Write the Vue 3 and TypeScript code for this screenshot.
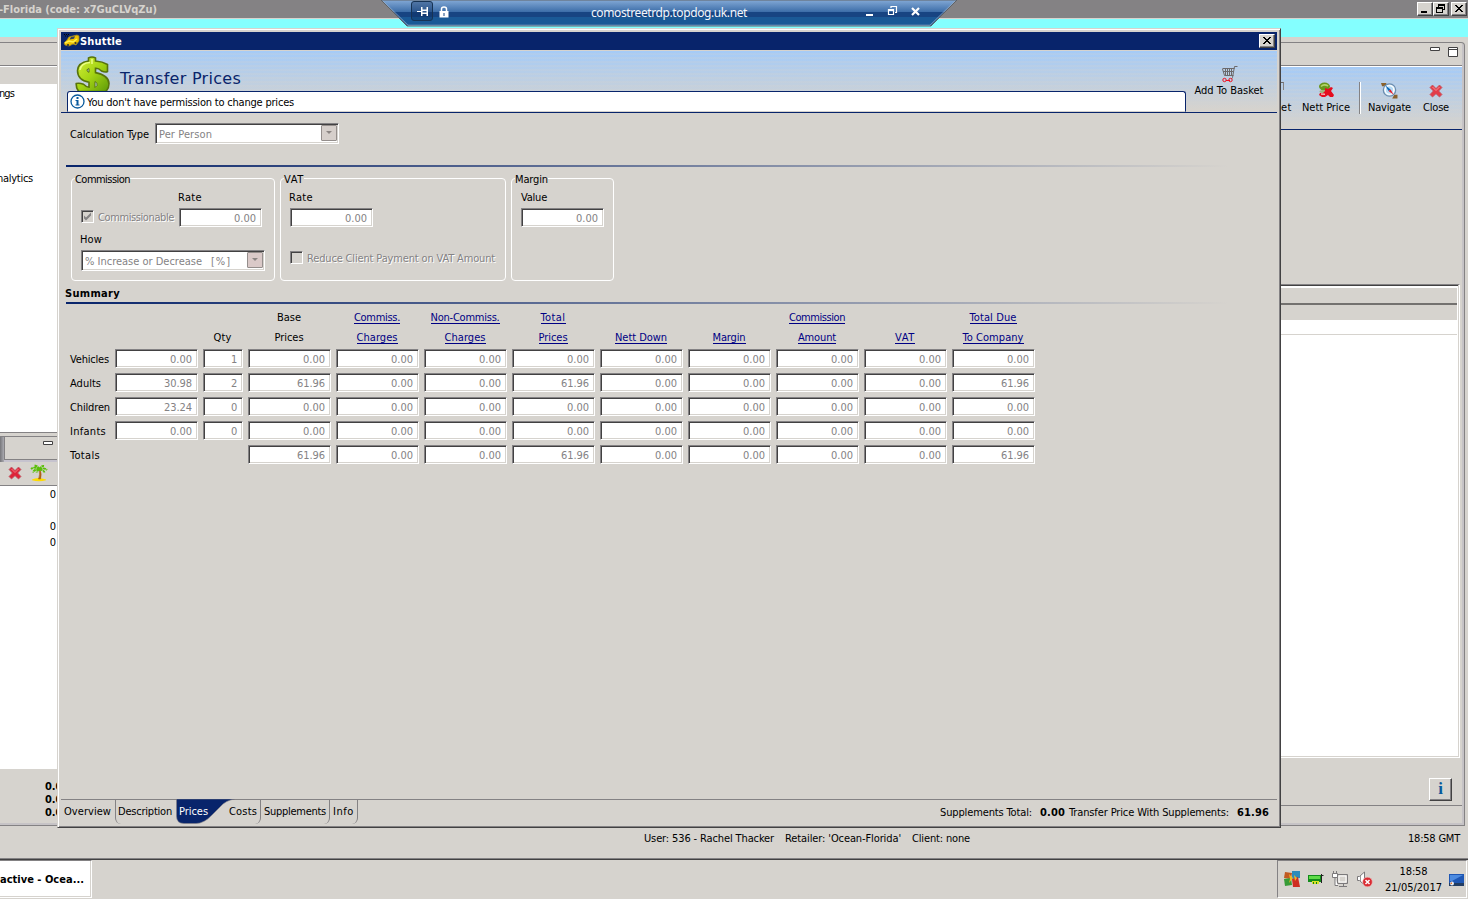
<script setup lang="ts">
import type { Directive } from 'vue'

// Spreads a label over a given pixel width by adjusting its tracking.
const vFit: Directive<HTMLElement, number> = {
  mounted(el, binding) {
    const natural = el.getBoundingClientRect().width
    const count = (el.textContent ?? '').length
    if (count > 0) el.style.letterSpacing = `${(binding.value - natural) / count}px`
  },
}

interface Column {
  top: string
  topW: number
  bottom: string
  bottomW: number
  link: boolean
}
interface Row {
  label: string
  width: number
  cells: string[]
}

const columns: Column[] = [
  { top: '', topW: 0, bottom: '', bottomW: 0, link: false },
  { top: '', topW: 0, bottom: 'Qty', bottomW: 18, link: false },
  { top: 'Base', topW: 24, bottom: 'Prices', bottomW: 29, link: false },
  { top: 'Commiss.', topW: 46, bottom: 'Charges', bottomW: 41, link: true },
  { top: 'Non-Commiss.', topW: 69, bottom: 'Charges', bottomW: 41, link: true },
  { top: 'Total', topW: 25, bottom: 'Prices', bottomW: 29, link: true },
  { top: '', topW: 0, bottom: 'Nett Down', bottomW: 52, link: true },
  { top: '', topW: 0, bottom: 'Margin', bottomW: 33, link: true },
  { top: 'Commission', topW: 56, bottom: 'Amount', bottomW: 38, link: true },
  { top: '', topW: 0, bottom: 'VAT', bottomW: 20, link: true },
  { top: 'Total Due', topW: 47, bottom: 'To Company', bottomW: 61, link: true },
]

const rows: Row[] = [
  { label: 'Vehicles', width: 39, cells: ['0.00', '1', '0.00', '0.00', '0.00', '0.00', '0.00', '0.00', '0.00', '0.00', '0.00'] },
  { label: 'Adults', width: 31, cells: ['30.98', '2', '61.96', '0.00', '0.00', '61.96', '0.00', '0.00', '0.00', '0.00', '61.96'] },
  { label: 'Children', width: 40, cells: ['23.24', '0', '0.00', '0.00', '0.00', '0.00', '0.00', '0.00', '0.00', '0.00', '0.00'] },
  { label: 'Infants', width: 36, cells: ['0.00', '0', '0.00', '0.00', '0.00', '0.00', '0.00', '0.00', '0.00', '0.00', '0.00'] },
  { label: 'Totals', width: 30, cells: ['', '', '61.96', '0.00', '0.00', '61.96', '0.00', '0.00', '0.00', '0.00', '61.96'] },
]

// Digits advance 6px and the decimal point 4px.
const numberWidth = (value: string): number => (value.includes('.') ? (value.length - 1) * 6 + 4 : value.length * 6)
</script>

<template>
  <div class="screen">
    <header class="app-title">
      <b v-fit="158" class="t app-name">-Florida (code: x7GuCLVqZu)</b>
      <div class="caption-btns">
        <span class="cap"><svg width="16" height="14"><path d="M4 9h6v2H4z" /></svg></span>
        <span class="cap"><svg width="16" height="14" fill="none" stroke="#000"><path d="M5.500 5V2.500h6v5H10M5 3.500h7M3.500 5.500h6v5h-6zM3 6.500h7" /></svg></span>
        <span class="cap last"><svg width="16" height="14"><path d="M4 3h2v1h1v1h2V4h1V3h2v1h-1v1h-1v1H9v1h1v1h1v1h1v1h-2V9H9V8H7v1H6v1H4V9h1V8h1V7h1V6H6V5H5V4H4z" /></svg></span>
      </div>
    </header>
    <div class="cyan"></div>

    <div class="workspace">
      <aside class="left">
        <div class="l-tab"></div>
        <div class="l-head"></div>
        <div class="l-tree">
          <span v-fit="15" class="t">ngs</span>
          <span v-fit="36" class="t second">nalytics</span>
        </div>
        <div class="l-gap"></div>
        <div class="l-tabs2">
          <div class="l-tabs2-in"><svg width="11" height="5"><path d="M.5.5h9v3h-9z" fill="#fff" stroke="#424142" /></svg></div>
        </div>
        <div class="l-tools">
          <svg width="14" height="14" viewBox="0 0 14 14"><path d="M3.500 1 7 4.500 10.500 1 13 3.500 9.700 7 13 10.500 10.500 13 7 9.700 3.500 13 1 10.500 4.300 7 1 3.500z" fill="#de2439" stroke="#b8606a" stroke-width=".8" /><path d="m3.500 3 3.500 3.500L10.500 3" stroke="#f47a80" fill="none" /></svg>
          <svg class="palm" width="18" height="18" viewBox="0 0 18 18"><path d="M2 15.500q6-3 14 0v.8q-7 2-14 0z" fill="#ffdb00" /><path d="M9 6q1.500 4-.5 9h2q1.500-5-.3-9z" fill="#b56a10" stroke="#9a5510" stroke-width=".5" /><path d="M9.500 5.500Q8 2 4.500 1.500M9.500 5.500Q5 2 1 5M9.500 5.500Q4 5 3 8.500M9.500 5.500Q7 6 6.500 8.500M9.500 5.500Q11 1.500 14 2M9.500 5.500Q14 3 17 6M9.500 5.500Q14 6 14.500 8.500" stroke="#5abf08" stroke-width="1.900" fill="none" stroke-dasharray="3 .6" /></svg>
        </div>
        <div class="l-values">
          <span class="t">0</span><span class="t v2">0</span><span class="t">0</span>
        </div>
        <div class="l-totals">
          <b v-fit="24" class="t">0.00</b><b v-fit="24" class="t">0.00</b><b v-fit="24" class="t">0.00</b>
        </div>
        <div class="l-foot"></div>
      </aside>

      <section class="right">
        <div class="r-tab">
          <svg width="28" height="11"><path d="M.5.5h9v3h-9zM18.500.5h9v9h-9z" fill="#fff" stroke="#424142" /><path d="M18 2.500h10" stroke="#424142" /></svg>
        </div>
        <div class="r-tools">
          <span class="r-cut"><i></i><span v-fit="11" class="t">et</span></span>
          <span class="tool nett">
            <svg width="16" height="16" viewBox="0 0 16 16"><ellipse cx="6.500" cy="4.500" rx="5.500" ry="4" fill="#69971d" /><path d="M3 4.500q3-3 7-.5" stroke="#b3d56b" stroke-width="1.500" fill="none" /><ellipse cx="5.500" cy="9.500" rx="4" ry="1.500" fill="#a1b47c" /><path d="m7 6 3 1 3-2 2 1-2 3 3 4-1 2h-3l-2-2-3 2H4l-3-2 1-2h3l2-2z" fill="#e50c1e" /><path d="m3 12 4 .2" stroke="#fff" /></svg>
            <span v-fit="48" class="t">Nett Price</span>
          </span>
          <i class="tool-sep"></i>
          <span class="tool nav">
            <svg width="17" height="17" viewBox="0 0 16 16"><path d="M0 1h5v3H1zM10.500 15.500h5v-3.500h-3z" fill="#8a612b" /><circle cx="8" cy="7.500" r="5.800" fill="#e4f1fa" stroke="#6b8daf" stroke-width="1.200" /><circle cx="8" cy="7.500" r="4" fill="#b6dcf6" stroke="#fff" /><path d="m4 3 5 4-2 1.500z" fill="#0c68b8" /><path d="m12 12-5-3.500L9 7z" fill="#e31c2a" /></svg>
            <span v-fit="43" class="t">Navigate</span>
          </span>
          <span class="tool close">
            <svg width="16" height="16" viewBox="-1 -2 16 16"><path d="M3.500 1 7 4.500 10.500 1 13 3.500 9.700 7 13 10.500 10.500 13 7 9.700 3.500 13 1 10.500 4.300 7 1 3.500z" fill="#e43c48" stroke="#bf5560" stroke-width=".8" /><path d="m3.500 3 3.500 3.500L10.500 3" stroke="#f79095" fill="none" /></svg>
            <span v-fit="26" class="t">Close</span>
          </span>
        </div>
        <div class="r-space"></div>
        <div class="r-table">
          <div class="r-th"></div>
          <div class="r-tr"></div>
          <div class="r-line"></div>
        </div>
        <div class="r-info"><span class="info-btn">i</span></div>
        <div class="r-bottom"></div>
      </section>
    </div>

    <div class="status">
      <span v-fit="130" class="t">User: 536 - Rachel Thacker</span>
      <span v-fit="116" class="t">Retailer: 'Ocean-Florida'</span>
      <span v-fit="58" class="t">Client: none</span>
      <span v-fit="52" class="t gmt">18:58 GMT</span>
    </div>

    <footer class="taskbar">
      <div class="task"><b v-fit="84" class="t">active - Ocea...</b></div>
      <div class="tray">
        <svg width="16" height="16" viewBox="0 0 16 16"><path d="M1 1 8 2 7 8 0 7z" fill="#c15a22" /><path d="M8 0h8v7l-8 1z" fill="#2d8bb9" /><path d="m0 8 7-1 1 7-7 1z" fill="#389c36" /><path d="m8 8 6-2 2 10H9z" fill="#cf2e22" /><path d="m5 3 4 4-4 5 1-4zM10 4l3 3-2 3z" fill="#f2b621" /></svg>
        <svg width="16" height="16" viewBox="0 0 16 16"><path d="M0 4h14v7H0z" fill="#128c1b" /><path d="M1 5h11v3H1z" fill="#5edb48" /><path d="M4 10h7v3H4z" fill="#d8e329" /><path d="M13 4.500h2.500M13.500 3v9" stroke="#222" /><path d="M5.500 11v2M8.500 11v2" stroke="#158012" /></svg>
        <svg width="17" height="17" viewBox="0 0 17 17" fill="#d6d3ce" stroke="#7b797b"><path d="M5.500 3.500h10v9h-10zM7 15.500h8M11.500 13v2.500" /><path d="M7 5h7v6H7z" stroke="#fff" /><path d="M.5 2.500h5v4h-5zM1.500 0v2.500M4.500 0v2.500M3 7v7.500h3" fill="#fff" /></svg>
        <svg class="vol" width="17" height="17" viewBox="0 0 17 17"><path d="M1.500 5.500h2l5-4.500v13l-5-4.500h-2z" fill="#fff" stroke="#7b797b" /><path d="M4.500 5v5" stroke="#999" /><circle cx="11.500" cy="11" r="4.800" fill="#d92b32" stroke="#f0b9b9" stroke-width=".6" /><path d="m9.500 9 4 4m0-4-4 4" stroke="#fff" stroke-width="1.500" /></svg>
        <div class="clock"><span v-fit="28" class="t">18:58</span><span v-fit="57" class="t">21/05/2017</span></div>
        <svg class="desk" width="15" height="13" viewBox="0 0 15 13"><path d="M0 0h15v9H0z" fill="#1f57b4" /><path d="M1 1h13L3 7H1z" fill="#4d8be0" /><path d="M0 9h15v3H0z" fill="#223d63" /><circle cx="3" cy="9.500" r="2" fill="#e9eef5" /><path d="M1 10h2V8z" fill="#e0752c" /></svg>
      </div>
    </footer>

    <!-- Shuttle dialog -->
    <div class="dialog">
      <div class="dlg-title">
        <svg width="17" height="14" viewBox="0 0 17 14"><path d="m1 9 3-3 2-3 8-2 2 1v5l-3 4-3-1-4 2-4-1z" fill="#efc200" stroke="#a58a20" stroke-width=".8" /><path d="m6.500 5.500 1.500-2.500 4-.8-1 2.500z" fill="#34415f" /><path d="m2 9 4-2 4 1 4-3" stroke="#fff04c" fill="none" stroke-width="1.500" /><circle cx="5" cy="11" r="1.100" fill="#333" /><circle cx="12.500" cy="9" r="1.100" fill="#333" /><path d="M1 .5h5M2 2h4" stroke="#000" stroke-dasharray="1 1" /></svg>
        <b v-fit="42" class="t">Shuttle</b>
        <span class="cap dlg-x"><svg width="16" height="14"><path d="M4 3h2v1h1v1h2V4h1V3h2v1h-1v1h-1v1H9v1h1v1h1v1h1v1h-2V9H9V8H7v1H6v1H4V9h1V8h1V7h1V6H6V5H5V4H4z" /></svg></span>
      </div>

      <div class="banner">
        <div class="banner-main">
          <div class="banner-head">
            <svg width="36" height="35" viewBox="0 0 36 35"><defs><linearGradient id="dollar" x1="0" y1="0" x2="1" y2="1"><stop offset="0" stop-color="#d8f03c" /><stop offset=".5" stop-color="#a4d414" /><stop offset="1" stop-color="#5d9a08" /></linearGradient></defs><path d="M13.500 2q3.500-2 7 0v3q7 .5 12 3.500v7q-2 1.300-6-.5-3-3-6-2.700v4.300q13 2.500 13.500 11 0 5-3.500 8H4q-3-3-2.800-8 3-1 7.300.7 3 3 5.500 3v-5Q2.500 24 2.500 14.500 3 6.500 13.500 5z" fill="url(#dollar)" stroke="#58730c" stroke-width="1.600" /><path d="M14 12.500q-3.500 1-1.500 3l1.500.8zM20 25.500q3 1.500 2 4l-2 2z" fill="#bcd6ec" stroke="#58730c" /><path d="M5 14q1-7 10-7.500M17 3v5" stroke="#eaff84" stroke-width="1.500" fill="none" /></svg>
            <h1 v-fit="121">Transfer Prices</h1>
          </div>
          <div class="notice">
            <svg width="15" height="15" viewBox="0 0 15 15"><circle cx="7.500" cy="7.500" r="6.500" fill="#fff" stroke="#08599c" stroke-width="1.300" /><path d="M6.500 3h2v2h-2zM5.500 6h3v4.500h1v1h-4v-1h1V7h-1z" fill="#08599c" /></svg>
            <span v-fit="207" class="t">You don't have permission to change prices</span>
          </div>
        </div>
        <div class="basket">
          <svg width="16" height="17" viewBox="0 0 16 17" fill="none" stroke="#6b696b"><path d="M15.500.5h-3l-2 11-1 1.500M.5 2.500h12M.5 3l2 6.500h9M3.500 3v6M5.500 3v6M7.500 3v6M9.500 3v6M1 5.500h10" /><path d="M4 14.500h4" stroke="#ef1021" /><circle cx="2.500" cy="14" r="1.700" stroke="#ef1021" /><circle cx="8.500" cy="14" r="1.700" stroke="#ef1021" /></svg>
          <span v-fit="69" class="t">Add To Basket</span>
        </div>
      </div>

      <div class="calc">
        <span v-fit="79" class="t">Calculation Type</span>
        <div class="field combo"><span v-fit="53" class="t">Per Person</span><i class="arrow"></i></div>
      </div>

      <div class="rule"></div>

      <div class="groups">
        <fieldset class="group g1">
          <span class="legend"><span v-fit="55" class="t">Commission</span></span>
          <div class="g-label rate"><span v-fit="24" class="t">Rate</span></div>
          <div class="g-row">
            <i class="check"><svg width="9" height="9"><path d="M1 3.500v3l2 2 5-5v-3l-5 5z" fill="#848284" /></svg></i>
            <span v-fit="76" class="t off">Commissionable</span>
            <div class="field"><span v-fit="22" class="t">0.00</span></div>
          </div>
          <div class="g-label how"><span v-fit="22" class="t">How</span></div>
          <div class="field combo"><span v-fit="117" class="t">% Increase or Decrease</span><span v-fit="20" class="t pct">[%]</span><i class="arrow pink"></i></div>
        </fieldset>
        <fieldset class="group g2">
          <span class="legend"><span v-fit="20" class="t">VAT</span></span>
          <div class="g-label"><span v-fit="24" class="t">Rate</span></div>
          <div class="g-row"><div class="field"><span v-fit="22" class="t">0.00</span></div></div>
          <div class="g-row reduce"><i class="check"></i><span v-fit="188" class="t off">Reduce Client Payment on VAT Amount</span></div>
        </fieldset>
        <fieldset class="group g3">
          <span class="legend"><span v-fit="33" class="t">Margin</span></span>
          <div class="g-label"><span v-fit="26" class="t">Value</span></div>
          <div class="g-row"><div class="field"><span v-fit="22" class="t">0.00</span></div></div>
        </fieldset>
      </div>

      <div class="summary-title"><b v-fit="55" class="t">Summary</b></div>
      <div class="rule"></div>

      <div class="summary">
        <div class="s-row s-head">
          <span></span>
          <div v-for="(c, i) in columns" :key="i" class="head" :class="{ link: c.link }">
            <span class="h-line"><span v-if="c.top" v-fit="c.topW" class="t">{{ c.top }}</span></span>
            <span class="h-line"><span v-if="c.bottom" v-fit="c.bottomW" class="t">{{ c.bottom }}</span></span>
          </div>
        </div>
        <div v-for="r in rows" :key="r.label" class="s-row">
          <span class="s-label"><span v-fit="r.width" class="t">{{ r.label }}</span></span>
          <div v-for="(v, i) in r.cells" :key="i" :class="{ field: v !== '' }">
            <span v-if="v" v-fit="numberWidth(v)" class="t">{{ v }}</span>
          </div>
        </div>
      </div>

      <div class="dlg-foot">
        <div class="tab overview"><span v-fit="47" class="t">Overview</span></div>
        <div class="tab desc"><span v-fit="54" class="t">Description</span></div>
        <div class="tab prices">
          <svg width="60" height="25"><path d="M.5 0H59Q50 1 44 8L36 16Q28 24.500 20 24.500H8Q.5 24.500.5 17z" fill="#08246b" stroke="#848284" stroke-width=".6" /></svg>
          <span v-fit="29" class="t">Prices</span>
        </div>
        <div class="tab costs"><span v-fit="28" class="t">Costs</span></div>
        <div class="tab supp"><span v-fit="62" class="t">Supplements</span></div>
        <div class="tab info"><span v-fit="21" class="t">Info</span></div>
        <div class="sums">
          <span v-fit="92" class="t">Supplements Total:</span>
          <b v-fit="25" class="t">0.00</b>
          <span v-fit="160" class="t">Transfer Price With Supplements:</span>
          <b v-fit="32" class="t">61.96</b>
        </div>
      </div>
    </div>

    <!-- Remote desktop connection bar -->
    <div class="rdp">
      <svg class="rdp-bg" width="576" height="27"><defs><linearGradient id="rdp" x1="0" y1="0" x2="0" y2="1"><stop offset="0" stop-color="#83a9d6" /><stop offset=".46" stop-color="#3c6da8" /><stop offset=".46" stop-color="#174482" /><stop offset=".64" stop-color="#174482" /><stop offset=".66" stop-color="#1a5996" /><stop offset="1" stop-color="#1a5996" /></linearGradient></defs><path d="M0 0H576L550 26H26z" fill="url(#rdp)" stroke="#5f6266" /><path d="M2 1 27 25.200H549L574 1" fill="none" stroke="#94abc4" stroke-width=".8" /></svg>
      <span class="pin"><svg width="12" height="11" viewBox="0 0 12 11" fill="#fff"><path d="M0 5h4v1H0zM4 1h1.500v9H4zM5 3.500h5V5H5zM5 6.500h5V8H5zM9.500 1H11v9H9.500z" /></svg></span>
      <svg class="lock" width="10" height="12" viewBox="0 0 10 12"><path d="M2.500 5V3q0-2 2.500-2t2.500 2v2" stroke="#fff" stroke-width="1.500" fill="none" /><path d="M.5 5h9v6.500h-9z" fill="#fff" /><path d="M4.500 7h1v3h-1z" fill="#174482" /></svg>
      <span v-fit="156" class="host">comostreetrdp.topdog.uk.net</span>
      <svg class="rdp-btns" width="56" height="12" viewBox="0 0 56 12"><path d="M0 9h7v2H0z" fill="#fff" /><path d="M22.500 4.500h5v5h-5zM22 5.500h6M25 3V1.500h5.500v6H29" stroke="#fff" stroke-width="1.200" fill="none" /><path d="m46 3 7 7M53 3l-7 7" stroke="#fff" stroke-width="2.200" /></svg>
    </div>
  </div>
</template>

<style>
html, body { margin: 0; overflow: hidden; background: #d6d3ce; }
</style>

<style scoped>
* { box-sizing: border-box; }
.screen {
  position: relative; width: 1468px; height: 899px; overflow: hidden; background: #d6d3ce; color: #000;
  font: 11px/14px "DejaVu Sans Condensed", "DejaVu Sans", Tahoma, sans-serif; font-stretch: condensed;
  display: flex; flex-direction: column;
}
.screen svg { display: block; flex: none; }
.t { display: inline-block; flex: none; white-space: pre; height: 14px; line-height: 14px; }

.app-title { height: 18px; background: #848284; display: flex; justify-content: space-between; flex: none; }
.app-name { color: #d6d3ce; margin: 3px 0 0 -1px; }
.caption-btns { display: flex; padding: 2px 1px 0 0; }
.cap { width: 16px; height: 14px; background: #d6d3ce; border: 1px solid; border-color: #fff #424142 #424142 #fff; box-shadow: inset -1px -1px #848284; display: block; flex: none; }
.cap svg { margin: -1px; shape-rendering: crispEdges; }
.cap.last { margin-left: 2px; }
.cyan { height: 19px; background: #84ffff; border-top: 1px solid #d6d3ce; flex: none; }

.workspace { height: 789px; flex: none; display: flex; justify-content: space-between; }
.left { width: 57px; overflow: hidden; display: flex; flex-direction: column; }
.left > div { flex: none; }
.l-tab { margin-top: 5px; height: 24px; border-top: 1px solid #848284; border-bottom: 1px solid #848284; }
.l-head { height: 18px; border-top: 1px solid #fff; }
.l-tree { height: 348px; background: #fff; padding-top: 3px; display: flex; flex-direction: column; align-items: flex-start; }
.l-tree .t { margin-left: -1px; }
.l-tree .second { margin: 71px 0 0 -3px; }
.l-gap { height: 4px; border-top: 1px solid #848284; }
.l-tabs2 { height: 26px; padding-left: 4px; background: linear-gradient(90deg, #77777b, #aaaab0 4px, #c6c3ce 4px); border-top: 1px solid #848284; }
.l-tabs2-in { height: 23px; background: #d6d3ce; border-left: 1px solid #848284; border-bottom: 1px solid #848284; padding: 4px 0 0 38px; }
.l-tools { height: 24px; border-bottom: 1px solid #848284; display: flex; padding: 4px 0 0 8px; gap: 9px; }
.palm { margin: -2px 0 0 -1px; }
.l-values { height: 283px; background: #fff; display: flex; flex-direction: column; align-items: flex-end; padding: 2px 1px 0 0; gap: 2px; }
.l-values .v2 { margin-top: 16px; }
.l-totals { height: 54px; padding: 11px 0 0 45px; display: flex; flex-direction: column; align-items: flex-start; }
.l-totals .t { height: 13px; }
.l-foot { height: 3px; background: #c6c3c6; border-bottom: 1px solid #848284; }

.right { width: 184px; height: 784px; margin: 5px 3px 0 0; padding: 0 2px 2px 0; display: flex; flex-direction: column; border-style: solid; border-color: #848284; border-width: 1px 1px 1px 0; border-top-right-radius: 4px; box-shadow: inset -2px -2px #c6c3c6; }
.r-tab { height: 23px; border-bottom: 1px solid #848284; padding: 4px 4px 0 0; display: flex; justify-content: flex-end; }
.r-tools { height: 64px; border-top: 1px solid #fff; border-bottom: 1px solid #08246b; display: flex; align-items: flex-start; padding-top: 15px;
  background: repeating-linear-gradient(180deg, rgba(214,211,206,0) 0 2px, rgba(214,211,206,.18) 2px 4px), linear-gradient(180deg, #a5cbf7, #d6d3ce 96%); }
.r-cut { width: 12px; height: 33px; display: flex; align-items: flex-end; overflow: hidden; justify-content: flex-end; }
.r-cut i { width: 3px; height: 8px; border-top: 1px solid #6b696b; border-right: 1px solid #848284; align-self: flex-start; margin-right: auto; flex: none; }
.r-cut .t { margin-left: -3px; margin-right: 1px; }
.tool { display: flex; flex-direction: column; align-items: center; height: 33px; justify-content: space-between; }
.nett { margin-left: 9px; }
.tool-sep { width: 2px; height: 32px; background: #848284; border-right: 1px solid #fff; margin: 0 7px 0 9px; }
.close { margin-left: 12px; }
.r-space { height: 154px; }
.r-table { height: 474px; margin-right: 2px; background: #fff; border-style: solid; border-width: 1px 1px 1px 0; border-color: #848284 #fff #fff; box-shadow: inset -1px -1px #d6d3ce, inset 0 1px #424142; padding: 3px 2px 0 0; }
.r-th { height: 17px; background: #d6d3ce; border-bottom: 2px solid #73716f; }
.r-tr { height: 15px; background: #d6d3ce; }
.r-line { height: 15px; border-bottom: 1px solid #d6d3ce; }
.r-info { height: 48px; border-bottom: 1px solid #848284; display: flex; justify-content: flex-end; padding: 20px 10px 0 0; }
.info-btn { width: 23px; height: 23px; border: 1px solid; border-color: #fff #424142 #424142 #fff; box-shadow: inset -1px -1px #848284; text-align: center; font: bold 17px/20px "Liberation Serif", serif; color: #08599c; font-stretch: normal; }

.status { height: 34px; flex: none; border-bottom: 1px solid #424142; box-shadow: inset 0 -1px #848284; display: flex; padding: 6px 8px 0 644px; gap: 11px; }
.status .gmt { margin-left: auto; }
.taskbar { flex: 1; display: flex; justify-content: space-between; padding-bottom: 2px; }
.task { width: 92px; background: #fff; border: 1px solid #fff; border-top-color: #848284; border-left: 0; box-shadow: inset -1px -1px #d6d3ce; padding: 12px 0 0; margin-bottom: -1px; }
.tray { width: 190px; margin-right: 1px; margin-bottom: -1px; border: 1px solid; border-color: #848284 #fff #fff #848284; display: flex; padding: 10px 0 0 6px; gap: 8px; }
.vol { margin-left: -1px; }
.clock { display: flex; flex-direction: column; align-items: center; margin: -6px 0 0 4px; gap: 2px; flex: none; width: 57px; }
.desk { margin: 3px 0 0 -1px; }

.dialog { position: absolute; left: 57px; top: 28px; width: 1224px; height: 800px; background: #d6d3ce; border: 1px solid; border-color: #d6d3ce #424142 #424142 #d6d3ce; box-shadow: inset 1px 1px #fff, inset -1px -1px #848284; padding: 3px; display: flex; flex-direction: column; }
.dialog > div { flex: none; }
.dlg-title { height: 18px; background: #08246b; color: #fff; display: flex; align-items: center; padding: 0 2px; }
.dlg-title .t { margin-top: 1px; height: 14px; }
.dlg-title .dlg-x { margin-left: auto; }
.banner { height: 62px; margin-top: 1px; border-bottom: 1px solid #08246b; display: flex; justify-content: space-between;
  background: repeating-linear-gradient(180deg, rgba(214,211,206,0) 0 2px, rgba(214,211,206,.18) 2px 4px), linear-gradient(180deg, #a5cbf7, #d6d3ce 96%); }
.banner-main { width: 1125px; padding-left: 6px; }
.banner-head { height: 40px; display: flex; padding: 5px 0 0 8px; }
h1 { margin: 12px 0 0 9px; font: 16px/22px "DejaVu Sans", Verdana, sans-serif; font-stretch: normal; height: 22px; color: #08246b; white-space: pre; }
.notice { height: 21px; background: #fff; border: 1px solid #08246b; border-bottom: 1px solid #d6d3ce; border-radius: 3px 3px 0 0; display: flex; padding: 2px 0 0 2px; gap: 2px; }
.notice .t { margin-top: 2px; }
.basket { width: 70px; margin-right: 13px; display: flex; flex-direction: column; align-items: center; padding-top: 15px; }
.basket svg { margin-left: 1px; }
.basket .t { margin-top: 1px; }

.field { width: 83px; height: 19px; background: #fff; border: 1px solid; border-color: #848284 #fff #fff #848284; box-shadow: inset 1px 1px #424142, inset -1px -1px #d6d3ce; color: #848284; display: flex; justify-content: flex-end; padding: 3px 5px 0 2px; flex: none; }
.combo { width: 184px; height: 21px; justify-content: flex-start; padding: 4px 1px 0 3px; align-items: flex-start; }
.arrow { width: 16px; height: 16px; margin: -3px 0 0 auto; background: #d6cfcb; border: 1px solid #948e8c; border-radius: 1px; display: flex; justify-content: center; padding-top: 5px; }
.arrow.pink { background: #dac9c8; }
.arrow::after { content: ""; width: 0; height: 0; border: 3px solid transparent; border-top-color: #8b8583; border-bottom: 0; }
.calc { height: 52px; padding: 10px 0 0 9px; display: flex; }
.calc > .t { margin: 5px 6px 0 0; }
.rule { height: 2px; margin-left: 5px; background: linear-gradient(90deg, #08246b, #d6d3ce 96%); }

.groups { height: 114px; padding: 11px 0 0 10px; display: flex; gap: 5px; }
.group { height: 103px; margin: 0; border: 1px solid #fff; border-radius: 4px; padding: 0 9px; min-width: 0; }
.g1 { width: 204px; }
.g2 { width: 226px; }
.g3 { width: 103px; }
.legend { display: flex; width: max-content; height: 12px; margin: -6px 0 0 -6px; background: #d6d3ce; }
.g-label { height: 23px; padding-top: 6px; display: flex; }
.g-label.rate { padding-left: 97px; }
.g2 .g-label { margin-left: -1px; }
.g-row { display: flex; height: 19px; align-items: flex-start; }
.check { width: 13px; height: 13px; margin-top: 2px; border: 1px solid; border-color: #848284 #fff #fff #848284; box-shadow: inset 1px 1px #424142; padding: 1px; flex: none; }
.off { color: #848284; text-shadow: 1px 1px #fff; margin: 3px 5px 0 4px; }
.g-label.how { height: 23px; padding: 6px 0 0; margin-left: -1px; }
.pct { margin-left: 9px; }
.reduce { margin-top: 22px; }
.reduce .off { margin-top: 3px; }

.summary-title { height: 21px; padding: 6px 0 0 4px; }
.summary { padding: 6px 0 0 9px; display: flex; flex-direction: column; gap: 5px; height: 495px; }
.s-row { display: grid; grid-template-columns: 40px 83px 40px repeat(9, 83px); column-gap: 5px; height: 19px; }
.s-head { height: 34px; }
.s-row .field { width: auto; }
.s-label { padding-top: 4px; }
.head { display: flex; flex-direction: column; align-items: center; gap: 6px; padding: 1px 1px 0 0; }
.h-line { height: 14px; display: flex; }
.head.link .t { color: #000084; border-bottom: 1px solid #000084; height: 13px; }

.dlg-foot { height: 25px; border-top: 1px solid #848284; display: flex; }
.tab { height: 24px; padding-top: 5px; }
.overview { width: 54px; padding-left: 3px; }
.desc { width: 61px; border-left: 1px solid #848284; border-bottom-left-radius: 6px; padding-left: 2px; }
.prices { width: 53px; color: #fff; padding-left: 3px; position: relative; }
.prices svg { position: absolute; left: 0; top: -1px; }
.prices .t { position: relative; }
.costs { width: 32px; padding-left: 0; }
.costs, .supp, .info { border-right: 1px solid #848284; border-bottom-right-radius: 6px; }
.supp { width: 69px; padding-left: 3px; }
.info { width: 28px; padding-left: 3px; }
.sums { margin-left: auto; display: flex; padding: 6px 8px 0 0; }
.sums .t:nth-child(2) { margin: 0 4px 0 8px; }
.sums .t:nth-child(4) { margin-left: 8px; }

.rdp { position: absolute; left: 381px; top: 0; width: 576px; height: 27px; display: flex; align-items: flex-start; padding-left: 30px; }
.rdp-bg { position: absolute; left: 0; top: 0; }
.rdp > :not(.rdp-bg) { position: relative; }
.pin { width: 22px; height: 20px; margin-top: 1px; border: 1px solid #173354; border-radius: 3px; background: rgba(10, 40, 90, .35); display: flex; padding: 4px 4px 0 5px; }
.lock { margin: 6px 0 0 6px; }
.host { margin: 5px 0 0 142px; font: 12px/16px "Noto Sans", "Open Sans", sans-serif; font-stretch: normal; color: #f2f6fb; white-space: pre; }
.rdp-btns { margin: 5px 0 0 119px; }
</style>
